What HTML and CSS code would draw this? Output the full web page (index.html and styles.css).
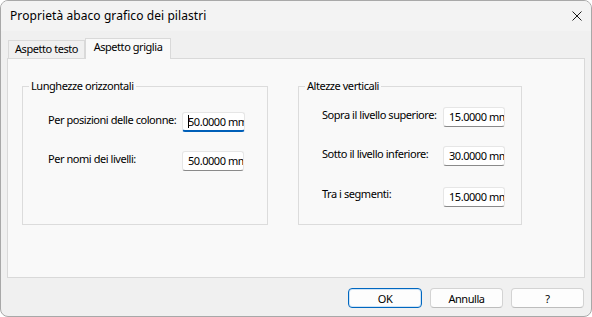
FILE: index.html
```html
<!DOCTYPE html>
<html lang="it">
<head>
    <meta charset="UTF-8">
    <title>Proprietà abaco grafico dei pilastri</title>
    <link rel="stylesheet" href="styles.css">
</head>
<body>
    <div class="dialog">
        <div class="titlebar">
            <span class="title">Proprietà abaco grafico dei pilastri</span>
            <svg class="close" width="10" height="10" viewBox="0 0 10 10">
                <path d="M0.5 0.5 L9.5 9.5 M9.5 0.5 L0.5 9.5" stroke="#1a1a1a" stroke-width="1" fill="none"/>
            </svg>
        </div>

        <div class="content">
            <div class="tabs">
                <div class="tab">Aspetto testo</div>
                <div class="tab active">Aspetto griglia</div>
            </div>

            <div class="panel">
                <!-- Lunghezze -->
                <fieldset class="group group-left">
                    <legend>Lunghezze orizzontali</legend>
                    <div class="row">
                        <label>Per posizioni delle colonne:</label>
                        <div class="field focused"><span class="caret"></span>50.0000 mm</div>
                    </div>
                    <div class="row">
                        <label>Per nomi dei livelli:</label>
                        <div class="field">50.0000 mm</div>
                    </div>
                </fieldset>

                <!-- Altezze -->
                <fieldset class="group group-right">
                    <legend>Altezze verticali</legend>
                    <div class="row">
                        <label>Sopra il livello superiore:</label>
                        <div class="field">15.0000 mm</div>
                    </div>
                    <div class="row">
                        <label>Sotto il livello inferiore:</label>
                        <div class="field">30.0000 mm</div>
                    </div>
                    <div class="row row-last">
                        <label>Tra i segmenti:</label>
                        <div class="field">15.0000 mm</div>
                    </div>
                </fieldset>
            </div>

            <div class="buttons">
                <button class="default">OK</button>
                <button>Annulla</button>
                <button>?</button>
            </div>
        </div>
    </div>
</body>
</html>
```

FILE: styles.css
```css
html, body { margin: 0; }
body { width: 592px; height: 317px; background: #fff; font-family: "Noto Sans", sans-serif; font-size: 11px; letter-spacing: -0.45px; color: #000; }

.dialog { box-sizing: border-box; width: 592px; height: 317px; border: 1px solid #a8a8a8; border-radius: 8px; background: #f0f0f0; overflow: hidden; display: flex; flex-direction: column; }

.titlebar { height: 30px; background: #f3f3f3; display: flex; align-items: center; justify-content: space-between; padding: 0 9px 0 9px; flex-shrink: 0; }
.title { font-size: 12px; line-height: 16px; letter-spacing: 0.08px; }
.close { display: block; }

.content { flex: 1; padding: 7px 6px 0 6px; display: flex; flex-direction: column; }

.tabs { display: flex; align-items: flex-end; height: 20px; padding-left: 1px; }
.tab { box-sizing: border-box; width: 77px; height: 18px; line-height: 16px; text-align: center; white-space: nowrap; border: 1px solid #d9d9d9; border-bottom: none; background: #f0f0f0; }
.tab.active { width: 86px; height: 21px; line-height: 15px; margin-bottom: -1px; background: #f9f9f9; position: relative; z-index: 1; }

.panel { box-sizing: border-box; height: 220px; background: #f9f9f9; border: 1px solid #d9d9d9; display: flex; gap: 30px; padding: 19px 0 0 14px; }

.group { box-sizing: border-box; margin: 0; padding: 0; border: 1px solid #dcdcdc; height: 147px; min-width: 0; }
.group legend { margin-left: 6px; padding: 0 2px; line-height: 16px; }
.group-left { width: 246px; padding-top: 18px; }
.group-right { width: 224px; padding-top: 13px; }

.row { display: flex; align-items: flex-start; margin-bottom: 19px; }
.row label { line-height: 16px; white-space: nowrap; }
.group-left .row { margin-left: 25px; }
.group-right .row { margin-left: 23px; }
.group-left label { width: 134px; }
.group-right label { width: 121px; }
.group-right .row:nth-child(3) { margin-bottom: 21px; }
.row-last label { margin-top: -1px; }

.field { box-sizing: border-box; width: 62px; height: 20px; background: #fff; border: 1px solid #e6e6e6; border-bottom-color: #8a8a8a; border-radius: 3px; padding: 0 0 0 5px; line-height: 18px; white-space: nowrap; overflow: hidden; }
.group-left .row:nth-child(2) .field { width: 63px; }
.field.focused { border-bottom: 2px solid #005fb8; line-height: 17px; }
.caret { display: inline-block; width: 1px; height: 13px; background: #000; vertical-align: -2px; margin-right: -1px; }

.buttons { display: flex; justify-content: flex-end; gap: 8px; padding: 10px 1px 0 0; }
button { box-sizing: border-box; width: 73px; height: 20px; padding: 0; font-family: inherit; font-size: 11px; letter-spacing: inherit; color: #000; background: #fdfdfd; border: 1px solid #d3d3d3; border-bottom-color: #bdbdbd; border-radius: 4px; }
button.default { width: 74px; border: 1px solid #0067c0; box-shadow: inset 0 0 0 1px #cfe3f5; }
```
